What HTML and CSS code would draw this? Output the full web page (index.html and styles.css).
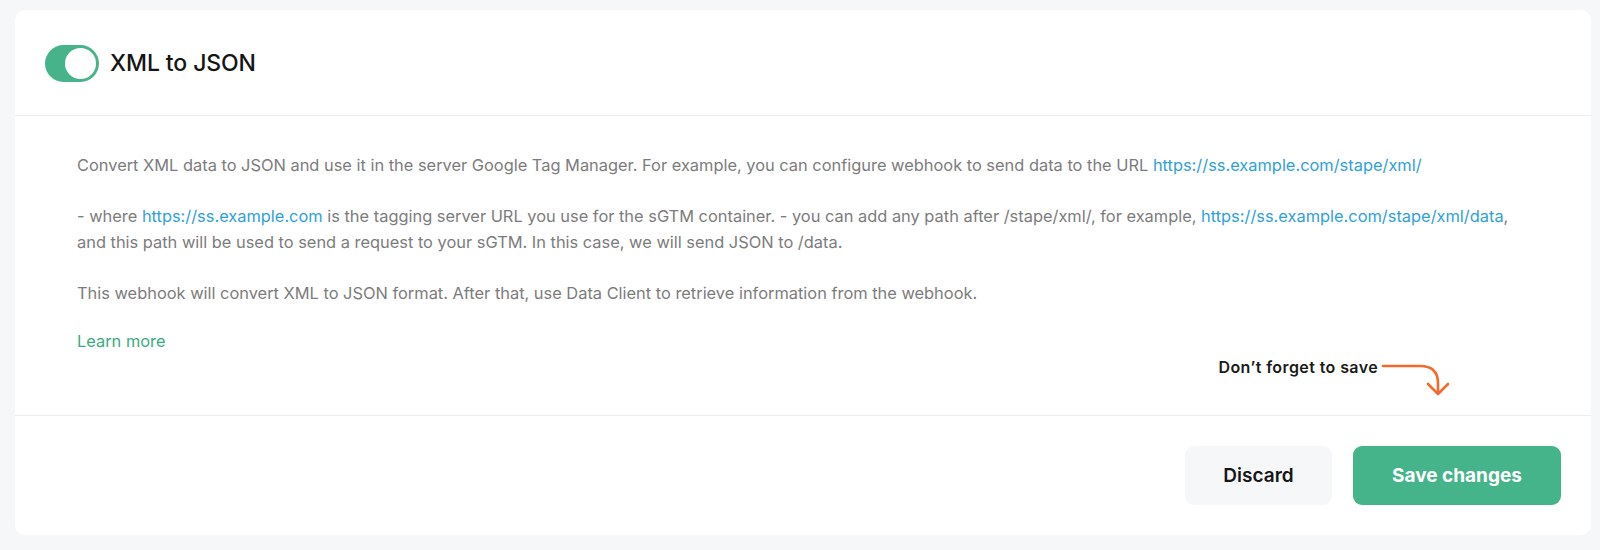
FILE: index.html
```html
<!DOCTYPE html>
<html lang="en">
<head>
<meta charset="utf-8">
<title>XML to JSON</title>
<link rel="stylesheet" href="styles.css">
</head>
<body>
<div class="card">
  <div class="card-header">
    <span class="toggle"><span class="knob"></span></span>
    <h1 class="title">XML to JSON</h1>
  </div>
  <div class="card-body">
    <p class="desc">Convert XML data to JSON and use it in the server Google Tag Manager. For example, you can configure webhook to send data to the URL <a class="link" href="#">https://ss.example.com/stape/xml/</a></p>
    <p class="desc">- where <a class="link" href="#">https://ss.example.com</a> is the tagging server URL you use for the sGTM container. - you can add any path after /stape/xml/, for example, <a class="link" href="#">https://ss.example.com/stape/xml/data</a>, and this path will be used to send a request to your sGTM. In this case, we will send JSON to /data.</p>
    <p class="desc">This webhook will convert XML to JSON format. After that, use Data Client to retrieve information from the webhook.</p>
    <a class="learn" href="#">Learn more</a>
    <div class="hint-row">
      <span class="hint">Don’t forget to save</span>
      <svg class="arrow" width="72" height="38" viewBox="0 0 72 38" fill="none" stroke="#f26a2c" stroke-width="2.6" stroke-linecap="round" stroke-linejoin="round">
        <path d="M3 5 H40 C52 5 58 11 58 22 V32"/>
        <path d="M48 23 L58 33 L68 23"/>
      </svg>
    </div>
  </div>
  <div class="card-footer">
    <button class="btn btn-secondary">Discard</button>
    <button class="btn btn-primary">Save changes</button>
  </div>
</div>
</body>
</html>
```
FILE: styles.css
```css
* { box-sizing: border-box; }
html, body { height: 100%; }
body {
  margin: 0;
  padding: 10px 9px 15px 15px;
  background: #f6f7f9;
  font-family: Inter, "Noto Sans", "Liberation Sans", sans-serif;
}
.card {
  background: #ffffff;
  border-radius: 10px;
  height: 525px;
  display: flex;
  flex-direction: column;
}
.card-header {
  height: 106px;
  border-bottom: 1px solid #ececee;
  display: flex;
  align-items: center;
  padding: 0 30px;
  gap: 11px;
}
.toggle {
  width: 54px;
  height: 37px;
  border-radius: 19px;
  background: #46b38a;
  display: flex;
  align-items: center;
  justify-content: flex-end;
  padding-right: 3px;
  margin-top: 2px;
}
.knob {
  width: 31px;
  height: 31px;
  border-radius: 50%;
  background: #ffffff;
}
.title {
  margin: 0;
  font-size: 23px;
  font-weight: 500;
  color: #151515;
  letter-spacing: -0.1px;
}
.card-body {
  height: 300px;
  border-bottom: 1px solid #ececee;
  padding: 37px 62px 0 62px;
  display: flex;
  flex-direction: column;
  align-items: flex-start;
}
.desc {
  margin: 0 0 25.5px 0;
  font-size: 16.4px;
  line-height: 25.5px;
  color: #7c7c7c;
}
.desc:last-of-type { margin-bottom: 22.5px; }
.link {
  color: #2f9fdc;
  text-decoration: none;
}
.learn {
  font-size: 16.4px;
  line-height: 25.5px;
  color: #3aab7e;
  text-decoration: none;
}
.hint-row {
  align-self: stretch;
  display: flex;
  justify-content: flex-end;
  align-items: flex-start;
  padding-right: 77px;
  margin-top: 2px;
}
.hint {
  font-size: 16px;
  line-height: 22px;
  font-weight: 600;
  letter-spacing: 0.4px;
  color: #1a1a1a;
  margin-right: 2px;
}
.arrow {
  margin-top: 5px;
  display: block;
}
.card-footer {
  flex: 1;
  display: flex;
  justify-content: flex-end;
  align-items: flex-start;
  padding: 30px 30px 0 0;
  gap: 21px;
}
.btn {
  height: 59px;
  border: none;
  border-radius: 9px;
  font-family: Inter, "Noto Sans", "Liberation Sans", sans-serif;
  font-size: 19px;
  cursor: pointer;
}
.btn-secondary {
  width: 147px;
  background: #f6f7f9;
  color: #161616;
  font-weight: 600;
}
.btn-primary {
  width: 208px;
  background: #46b48b;
  color: #ffffff;
  font-weight: 700;
}
```
